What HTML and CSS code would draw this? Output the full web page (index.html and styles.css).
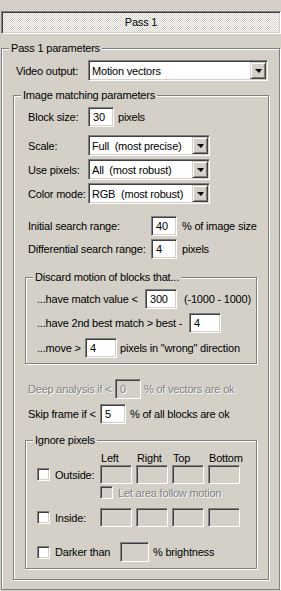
FILE: index.html
```html
<!DOCTYPE html>
<html lang="en">
<head>
    <meta charset="UTF-8">
    <meta name="viewport" content="width=device-width, initial-scale=1.0">
    <title>Pass 1</title>
    <link rel="stylesheet" href="styles.css">
</head>
<body>
    <div class="pass-title">Pass 1</div>

    <div class="group group-outer">
        <div class="legend">Pass 1 parameters</div>

        <div class="row row-video">
            <span class="lbl w72">Video output:</span>
            <div class="combo combo-wide">
                <span class="combo-text">Motion vectors</span>
                <span class="drop"></span>
            </div>
        </div>

        <div class="group group-match">
            <div class="legend">Image matching parameters</div>

            <div class="row row-block">
                <span class="lbl w60">Block size:</span>
                <span class="field w26">30</span>
                <span class="unit">pixels</span>
            </div>

            <div class="row row-combo row-scale">
                <span class="lbl w60">Scale:</span>
                <div class="combo">
                    <span class="combo-text">Full&nbsp; (most precise)</span>
                    <span class="drop"></span>
                </div>
            </div>

            <div class="row row-combo">
                <span class="lbl w60">Use pixels:</span>
                <div class="combo">
                    <span class="combo-text">All&nbsp; (most robust)</span>
                    <span class="drop"></span>
                </div>
            </div>

            <div class="row row-combo">
                <span class="lbl w60">Color mode:</span>
                <div class="combo">
                    <span class="combo-text">RGB&nbsp; (most robust)</span>
                    <span class="drop"></span>
                </div>
            </div>

            <div class="row row-initial">
                <span class="lbl w123">Initial search range:</span>
                <span class="field w26">40</span>
                <span class="unit">% of image size</span>
            </div>

            <div class="row row-diff">
                <span class="lbl w123">Differential search range:</span>
                <span class="field w26">4</span>
                <span class="unit">pixels</span>
            </div>

            <div class="group group-inner group-discard">
                <div class="legend">Discard motion of blocks that...</div>

                <div class="row row-match">
                    <span class="lbl w108">...have match value &lt;</span>
                    <span class="field w32">300</span>
                    <span class="unit gap7">(-1000 - 1000)</span>
                </div>
                <div class="row row-best">
                    <span class="lbl w152">...have 2nd best match &gt; best -</span>
                    <span class="field w32">4</span>
                </div>
                <div class="row row-move">
                    <span class="lbl w48">...move &gt;</span>
                    <span class="field w32">4</span>
                    <span class="unit gap3">pixels in "wrong" direction</span>
                </div>
            </div>

            <div class="row row-deep disabled">
                <span class="lbl w87">Deep analysis if &lt;</span>
                <span class="field w26 off">0</span>
                <span class="unit gap3">% of vectors are ok</span>
            </div>

            <div class="row row-skip">
                <span class="lbl w72">Skip frame if &lt;</span>
                <span class="field w26">5</span>
                <span class="unit">% of all blocks are ok</span>
            </div>

            <div class="group group-inner group-ignore">
                <div class="legend">Ignore pixels</div>

                <div class="edge-head">
                    <span>Left</span>
                    <span>Right</span>
                    <span>Top</span>
                    <span>Bottom</span>
                </div>

                <div class="row row-edges">
                    <label class="check w63"><span class="box"></span>Outside:</label>
                    <span class="field edge off"></span>
                    <span class="field edge off"></span>
                    <span class="field edge off"></span>
                    <span class="field edge off"></span>
                </div>

                <div class="row row-follow disabled">
                    <label class="check"><span class="box off"></span>Let area follow motion</label>
                </div>

                <div class="row row-edges row-inside">
                    <label class="check w63"><span class="box"></span>Inside:</label>
                    <span class="field edge off"></span>
                    <span class="field edge off"></span>
                    <span class="field edge off"></span>
                    <span class="field edge off"></span>
                </div>

                <div class="row row-darker">
                    <label class="check w83"><span class="box"></span>Darker than</label>
                    <span class="field w29 off"></span>
                    <span class="unit">% brightness</span>
                </div>
            </div>
        </div>
    </div>
</body>
</html>
```

FILE: styles.css
```css
body {
    margin: 0;
    background-color: #d4d0c8;
    font-family: "Liberation Sans", Arial, sans-serif;
    font-size: 11px;
    letter-spacing: -0.2px;
    color: #000;
}

/* sunken 3d edge used by title, fields, combos and checkboxes */
.pass-title,
.field,
.combo,
.box {
    box-sizing: border-box;
    border: 1px solid;
    border-color: #808080 #fff #fff #808080;
    box-shadow: inset 1px 1px 0 #404040, inset -1px -1px 0 #d4d0c8;
}

.pass-title {
    margin: 11px 0 0 1px;
    width: 280px;
    height: 23px;
    line-height: 21px;
    text-align: center;
    background-color: #fff;
    background-image: conic-gradient(#fff 25%, #d4d0c8 0 50%, #fff 0 75%, #d4d0c8 0);
    background-size: 2px 2px;
}

/* etched group box */
.group {
    box-sizing: border-box;
    border: 1px solid #808080;
    box-shadow: inset 1px 1px 0 #fff, 1px 1px 0 #fff;
}

.legend {
    width: fit-content;
    height: 13px;
    line-height: 13px;
    margin: -7px 0 5px 6px;
    padding: 0 2px;
    background: #d4d0c8;
}

.group-outer {
    margin: 14px 0 0 1px;
    width: 279px;
    height: 542px;
    padding-bottom: 7px;
}

.group-outer .legend {
    margin-left: 7px;
}

.group-match {
    margin: 14px 0 0 11px;
    width: 256px;
    padding-bottom: 10px;
}

.group-inner {
    margin-left: 11px;
    width: 232px;
}

.group-discard {
    margin-top: 18px;
    padding-bottom: 5px;
}

.group-ignore {
    margin-top: 16px;
    padding-bottom: 6px;
}

.row {
    display: flex;
    align-items: center;
    height: 20px;
    padding-left: 14px;
}

.group-inner .row {
    padding-left: 11px;
}

.lbl {
    flex: none;
    white-space: nowrap;
}

.w48 { width: 48px; }
.w60 { width: 60px; }
.w63 { width: 63px; }
.w72 { width: 72px; }
.w83 { width: 83px; }
.w87 { width: 87px; }
.w108 { width: 108px; }
.w123 { width: 123px; }
.w152 { width: 152px; }

.field {
    flex: none;
    height: 20px;
    line-height: 18px;
    padding-left: 4px;
    background-color: #fff;
}

.field.w26 { width: 26px; }
.field.w29 { width: 29px; }
.field.w32 { width: 32px; }

.field.off {
    background-color: #d4d0c8;
}

.unit {
    margin-left: 4px;
    white-space: nowrap;
}

.unit.gap7 { margin-left: 7px; }
.unit.gap3 { margin-left: 3px; }

.row-initial .unit,
.row-diff .unit {
    margin-left: 5px;
}

/* combo boxes */
.combo {
    position: relative;
    flex: none;
    display: flex;
    align-items: center;
    width: 122px;
    height: 21px;
    background-color: #fff;
}

.combo-wide {
    width: 180px;
}

.combo-text {
    flex: 1;
    padding-left: 3px;
    white-space: nowrap;
}

.drop {
    box-sizing: border-box;
    width: 16px;
    height: 17px;
    margin-right: 1px;
    background: #d4d0c8;
    border: 1px solid;
    border-color: #d4d0c8 #404040 #404040 #d4d0c8;
    box-shadow: inset 1px 1px 0 #fff, inset -1px -1px 0 #808080;
    display: flex;
    align-items: center;
    justify-content: center;
}

.drop::after {
    content: "";
    border-left: 4px solid transparent;
    border-right: 3px solid transparent;
    border-top: 4px solid #000;
    margin-top: 1px;
}

.row-video {
    height: 21px;
    margin-top: 5px;
}

.row-block { margin-top: 5px; }
.row-combo { height: 21px; margin-top: 3px; }
.row-scale { margin-top: 8px; }
.row-initial { margin-top: 12px; }
.row-diff { margin-top: 3px; }

.row-match { margin-top: 2px; }
.row-best { margin-top: 4px; }
.row-move { margin-top: 5px; }

.row-deep { margin-top: 15px; }
.row-skip { margin-top: 5px; }

.disabled {
    color: #808080;
    text-shadow: 1px 1px 0 #fff;
}

/* ignore pixels box */
.edge-head {
    display: flex;
    height: 13px;
    line-height: 13px;
    padding-left: 75px;
}

.edge-head span {
    width: 36px;
}

.check {
    display: flex;
    align-items: center;
    flex: none;
    white-space: nowrap;
}

.box {
    width: 13px;
    height: 13px;
    margin-right: 5px;
    background-color: #fff;
}

.box.off {
    background-color: #d4d0c8;
}

.row-edges {
    height: 19px;
}

.field.edge {
    width: 32px;
    height: 19px;
    margin-right: 4px;
}

.row-follow {
    height: 13px;
    margin-top: 2px;
    padding-left: 74px !important;
}

.row-inside { margin-top: 9px; }
.row-darker { margin-top: 15px; }
```
